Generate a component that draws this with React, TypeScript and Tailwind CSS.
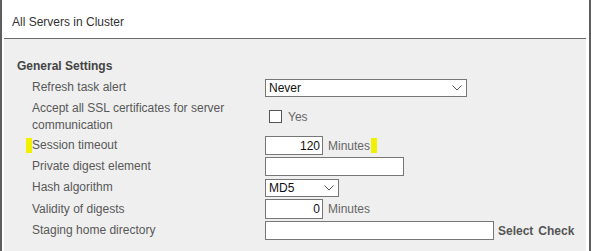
import React from "react";

function Chevron() {
  return (
    <svg
      width="10"
      height="6"
      viewBox="0 0 10 6"
      className="pointer-events-none absolute right-[5px] top-1/2 -translate-y-1/2"
    >
      <path d="M0.5 0.5 L5 5 L9.5 0.5" fill="none" stroke="#555" strokeWidth="1" />
    </svg>
  );
}

function Select({ value, width }: { value: string; width: string }) {
  return (
    <div className={"relative h-[18px] " + width}>
      <select
        defaultValue={value}
        className="h-full w-full appearance-none border border-[#767676] bg-white pl-[3px] text-[12px] leading-[14px] text-[#111] outline-none"
      >
        <option>{value}</option>
      </select>
      <Chevron />
    </div>
  );
}

function Row({
  label,
  children,
  height,
}: {
  label: React.ReactNode;
  children: React.ReactNode;
  height?: string;
}) {
  return (
    <div className={"flex items-center " + (height ?? "h-[21px]")}>
      <div className="flex w-[233px] items-center leading-[17px] text-[#585858]">{label}</div>
      <div className="flex items-center">{children}</div>
    </div>
  );
}

export default function App() {
  return (
    <div className="flex h-[251px] w-[591px] flex-col border-l-2 border-r-2 border-[#5e5e5e] bg-white font-['Liberation_Sans',Arial,sans-serif] text-[12px]">
      <div className="h-[38px] pl-[10px] pt-[15px] leading-[14px] text-[#333]">
        All Servers in Cluster
      </div>
      <div className="ml-[2px] mr-[3px] flex-1 border-t border-[#6b6b6b] bg-[#efefef] pt-[20px]">
        <div className="pl-[13px] font-bold leading-[14px] text-[#444]">General Settings</div>
        <div className="mt-[4px] pl-[28px]">
          <Row label="Refresh task alert">
            <Select value="Never" width="w-[202px]" />
          </Row>
          <Row
            height="h-[37px]"
            label={
              <span>
                Accept all SSL certificates for server
                <br />
                communication
              </span>
            }
          >
            <div className="ml-[4px] h-[13px] w-[13px] border border-[#555] bg-white" />
            <span className="ml-[6px] leading-[14px] text-[#666]">Yes</span>
          </Row>
          <Row
            label={
              <>
                <span className="-ml-[6px] inline-block h-[15px] w-[6px] bg-[#f0f000]" />
                <span>Session timeout</span>
              </>
            }
          >
            <input
              readOnly
              defaultValue="120"
              className="h-[19px] w-[58px] border border-[#767676] bg-white pr-[2px] text-right text-[12px] text-[#111] outline-none"
            />
            <span className="ml-[5px] leading-[14px] text-[#666]">Minutes</span>
            <span className="ml-[1px] inline-block h-[15px] w-[6px] bg-[#f0f000]" />
          </Row>
          <Row label="Private digest element">
            <input
              readOnly
              defaultValue=""
              className="h-[19px] w-[139px] border border-[#767676] bg-white text-[12px] outline-none"
            />
          </Row>
          <Row label="Hash algorithm">
            <Select value="MD5" width="w-[74px]" />
          </Row>
          <Row label="Validity of digests" height="h-[22px]">
            <input
              readOnly
              defaultValue="0"
              className="h-[20px] w-[58px] border border-[#767676] bg-white pr-[2px] text-right text-[12px] text-[#111] outline-none"
            />
            <span className="ml-[5px] leading-[14px] text-[#666]">Minutes</span>
          </Row>
          <Row label="Staging home directory">
            <input
              readOnly
              defaultValue=""
              className="h-[19px] w-[229px] border border-[#767676] bg-white text-[12px] outline-none"
            />
            <span className="ml-[4px] font-bold leading-[14px] text-[#555]">Select</span>
            <span className="ml-[5px] font-bold leading-[14px] text-[#555]">Check</span>
          </Row>
        </div>
      </div>
    </div>
  );
}
